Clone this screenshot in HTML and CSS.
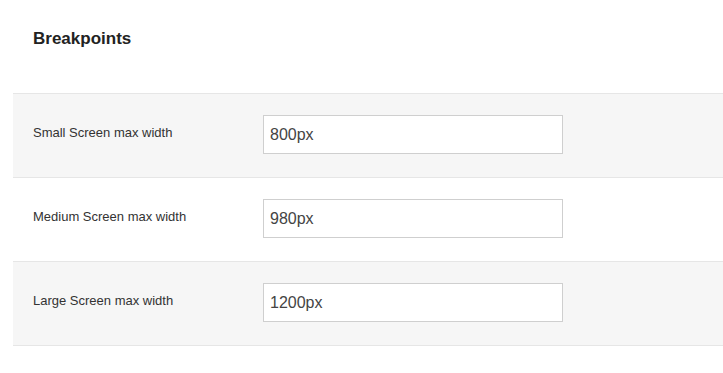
FILE: index.html
```html
<!DOCTYPE html>
<html lang="en">
<head>
  <meta charset="UTF-8" />
  <meta name="viewport" content="width=device-width, initial-scale=1.0" />
  <title>Breakpoints</title>
  <link rel="stylesheet" href="styles.css">
</head>
<body>

  <h2 class="section-title">Breakpoints</h2>

  <div class="settings">
    <div class="setting-row">
      <label for="bp-small">Small Screen max width</label>
      <input type="text" id="bp-small" value="800px" />
    </div>
    <div class="setting-row">
      <label for="bp-medium">Medium Screen max width</label>
      <input type="text" id="bp-medium" value="980px" />
    </div>
    <div class="setting-row">
      <label for="bp-large">Large Screen max width</label>
      <input type="text" id="bp-large" value="1200px" />
    </div>
  </div>

</body>
</html>
```

FILE: styles.css
```css
body {
  font-family: 'Liberation Sans', Arial, sans-serif;
  margin: 0;
  padding: 0;
  background-color: #fff;
  color: #333;
}

.section-title {
  font-size: 17px;
  line-height: 20px;
  font-weight: bold;
  color: #222;
  margin: 0;
  padding: 29px 0 0 33px;
  height: 93px;
  box-sizing: border-box;
}

.settings {
  margin-left: 13px;
  border-bottom: 1px solid #e6e6e6;
}

.setting-row {
  display: grid;
  grid-template-columns: 250px 300px;
  align-items: center;
  height: 84px;
  padding-bottom: 2px;
  box-sizing: border-box;
  border-top: 1px solid #e6e6e6;
  background: #fff;
}

.setting-row:nth-child(odd) {
  background: #f6f6f6;
}

.setting-row label {
  font-size: 13px;
  color: #333;
  padding-left: 20px;
  margin-bottom: 4px;
}

.setting-row input {
  width: 300px;
  height: 39px;
  box-sizing: border-box;
  border: 1px solid #cfcfcf;
  background: #fff;
  padding: 0 6px;
  font-family: 'Liberation Sans', Arial, sans-serif;
  font-size: 16px;
  color: #444;
  border-radius: 0;
  outline: none;
}
```
